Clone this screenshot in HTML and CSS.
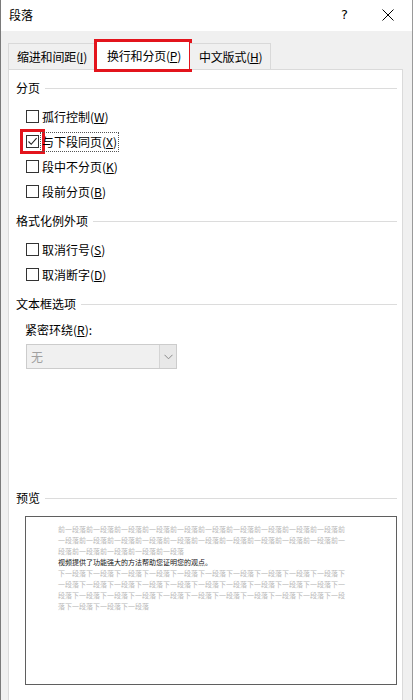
FILE: index.html
```html
<!DOCTYPE html>
<html lang="zh-CN">
<head>
<meta charset="utf-8">
<title>段落</title>
<link rel="stylesheet" href="styles.css">
</head>
<body>
<div class="window">
  <div class="titlebar">
    <span class="title">段落</span>
    <span class="help">?</span>
    <span class="close">
      <svg width="12" height="12" viewBox="0 0 12 12"><path d="M0.5 0.5 L11.5 11.5 M11.5 0.5 L0.5 11.5" stroke="#000" stroke-width="1" fill="none"/></svg>
    </span>
  </div>
  <div class="tabs">
    <div class="tab t1">缩进和间距(<u>I</u>)</div>
    <div class="tab t2 selected marked">换行和分页(<u>P</u>)</div>
    <div class="tab t3">中文版式(<u>H</u>)</div>
  </div>
  <div class="panel">
    <div class="group-head"><span>分页</span></div>
    <div class="rows">
      <div class="row"><span class="box"></span><span class="label">孤行控制(<u>W</u>)</span></div>
      <div class="row"><span class="box checked marked"><svg width="11" height="11" viewBox="0 0 11 11"><path d="M1.5 5.5 L4.2 8.3 L9.6 2.2" stroke="#222" stroke-width="1.1" fill="none"/></svg></span><span class="label focus">与下段同页(<u>X</u>)</span></div>
      <div class="row"><span class="box"></span><span class="label">段中不分页(<u>K</u>)</span></div>
      <div class="row"><span class="box"></span><span class="label">段前分页(<u>B</u>)</span></div>
    </div>
    <div class="group-head"><span>格式化例外项</span></div>
    <div class="rows">
      <div class="row"><span class="box"></span><span class="label">取消行号(<u>S</u>)</span></div>
      <div class="row"><span class="box"></span><span class="label">取消断字(<u>D</u>)</span></div>
    </div>
    <div class="group-head"><span>文本框选项</span></div>
    <div class="field-label">紧密环绕(<u>R</u>):</div>
    <div class="select">
      <span class="select-value">无</span>
      <span class="select-btn"><svg width="9" height="6" viewBox="0 0 9 6"><path d="M0.5 0.8 L4.5 4.8 L8.5 0.8" stroke="#8a8a8a" stroke-width="1" fill="none"/></svg></span>
    </div>
    <div class="group-head preview-head"><span>预览</span></div>
    <div class="preview">
      <div class="pline grey">前一段落前一段落前一段落前一段落前一段落前一段落前一段落前一段落前一段落前一段落前</div>
      <div class="pline grey">一段落前一段落前一段落前一段落前一段落前一段落前一段落前一段落前一段落前一段落前一</div>
      <div class="pline grey">段落前一段落前一段落前一段落前一段落</div>
      <div class="pline dark">视频提供了功能强大的方法帮助您证明您的观点。</div>
      <div class="pline grey">下一段落下一段落下一段落下一段落下一段落下一段落下一段落下一段落下一段落下一段落下</div>
      <div class="pline grey">一段落下一段落下一段落下一段落下一段落下一段落下一段落下一段落下一段落下一段落下一</div>
      <div class="pline grey">段落下一段落下一段落下一段落下一段落下一段落下一段落下一段落下一段落下一段落下一段</div>
      <div class="pline grey">落下一段落下一段落下一段落</div>
    </div>
  </div>
</div>
</body>
</html>
```

FILE: styles.css
```css
html, body {
  margin: 0;
  padding: 0;
}
body {
  width: 413px;
  height: 700px;
  overflow: hidden;
  background: #f0f0f0;
  font-family: "Noto Sans CJK SC", "Noto Sans", sans-serif;
  font-size: 12px;
  color: #000;
}
u {
  text-decoration: underline;
  text-underline-offset: 1px;
}
.window {
  height: 700px;
  box-sizing: border-box;
  border-left: 1px solid #7a7a7a;
  border-right: 1px solid #9a9a9a;
  display: flex;
  flex-direction: column;
  background: #f0f0f0;
}
.titlebar {
  height: 31px;
  background: #fff;
  display: flex;
  align-items: center;
  padding-left: 8px;
  box-sizing: border-box;
  flex: none;
}
.title {
  line-height: 16px;
  margin-top: -1px;
}
.help {
  margin-left: auto;
  font-family: "DejaVu Sans", sans-serif;
  font-size: 13px;
  margin-top: -2px;
}
.close {
  display: flex;
  margin-left: 34px;
  margin-right: 18px;
  margin-top: -1px;
}
.tabs {
  display: flex;
  align-items: flex-end;
  padding-left: 7px;
  height: 38px;
  box-sizing: border-box;
  flex: none;
  position: relative;
  z-index: 1;
}
.tab {
  height: 26px;
  box-sizing: border-box;
  border: 1px solid #d9d9d9;
  border-bottom: none;
  background: #f0f0f0;
  display: flex;
  align-items: center;
  line-height: 16px;
  white-space: nowrap;
  letter-spacing: -0.2px;
}
.tab + .tab {
  border-left: none;
}
.t1 {
  width: 88px;
  padding-left: 8px;
}
.t2 {
  width: 94px;
  padding-left: 10px;
}
.t3 {
  width: 81px;
  padding-left: 9px;
}
.tab.selected {
  height: 29px;
  background: #fff;
  border-left: 1px solid #d9d9d9;
  margin-bottom: -1px;
  padding-bottom: 1px;
}
.marked {
  outline: 3px solid #e3141c;
  outline-offset: -1px;
}
.panel {
  flex: 1;
  margin-left: 7px;
  margin-right: 9px;
  background: #fff;
  border: 1px solid #dadada;
  border-bottom: none;
  padding: 10px 5px 0 7px;
  display: flex;
  flex-direction: column;
}
.group-head {
  display: flex;
  align-items: center;
  height: 16px;
  line-height: 16px;
  gap: 5px;
}
.group-head::after {
  content: "";
  flex: 1;
  height: 1px;
  background: #dcdcdc;
  margin-top: 1px;
}
.rows {
  display: flex;
  flex-direction: column;
  margin-top: 8px;
  margin-bottom: 9px;
  padding-left: 10px;
}
.row {
  height: 25px;
  display: flex;
  align-items: center;
  gap: 1px;
}
.box {
  width: 13px;
  height: 13px;
  box-sizing: border-box;
  border: 1px solid #333;
  background: #fff;
  display: flex;
  align-items: center;
  justify-content: center;
  flex: none;
}
.box.marked {
  outline-offset: 3px;
}
.label {
  line-height: 16px;
  padding: 1px 1px;
  border: 1px dotted transparent;
}
.label.focus {
  border-color: #555;
}
.field-label {
  margin-top: 10px;
  padding-left: 9px;
  line-height: 16px;
}
.select {
  margin-top: 6px;
  margin-left: 10px;
  width: 151px;
  height: 25px;
  box-sizing: border-box;
  border: 1px solid #cccccc;
  background: #f0f0f0;
  display: flex;
  align-items: center;
}
.select-value {
  flex: 1;
  padding-left: 4px;
  color: #a0a0a0;
  line-height: 16px;
}
.select-btn {
  width: 16px;
  height: 23px;
  border-left: 1px solid #d4d4d4;
  background: #e8e8e8;
  display: flex;
  align-items: center;
  justify-content: center;
}
.preview-head {
  margin-top: 121px;
}
.preview {
  margin-top: 10px;
  margin-left: 9px;
  width: 372px;
  height: 169px;
  box-sizing: border-box;
  border: 1px solid #5f5f5f;
  padding: 7px 0 0 32px;
  display: flex;
  flex-direction: column;
}
.pline {
  font-size: 7px;
  line-height: 11px;
  height: 11px;
  white-space: nowrap;
}
.pline.grey {
  color: #b9b9b9;
}
.pline.dark {
  color: #111;
}
```
